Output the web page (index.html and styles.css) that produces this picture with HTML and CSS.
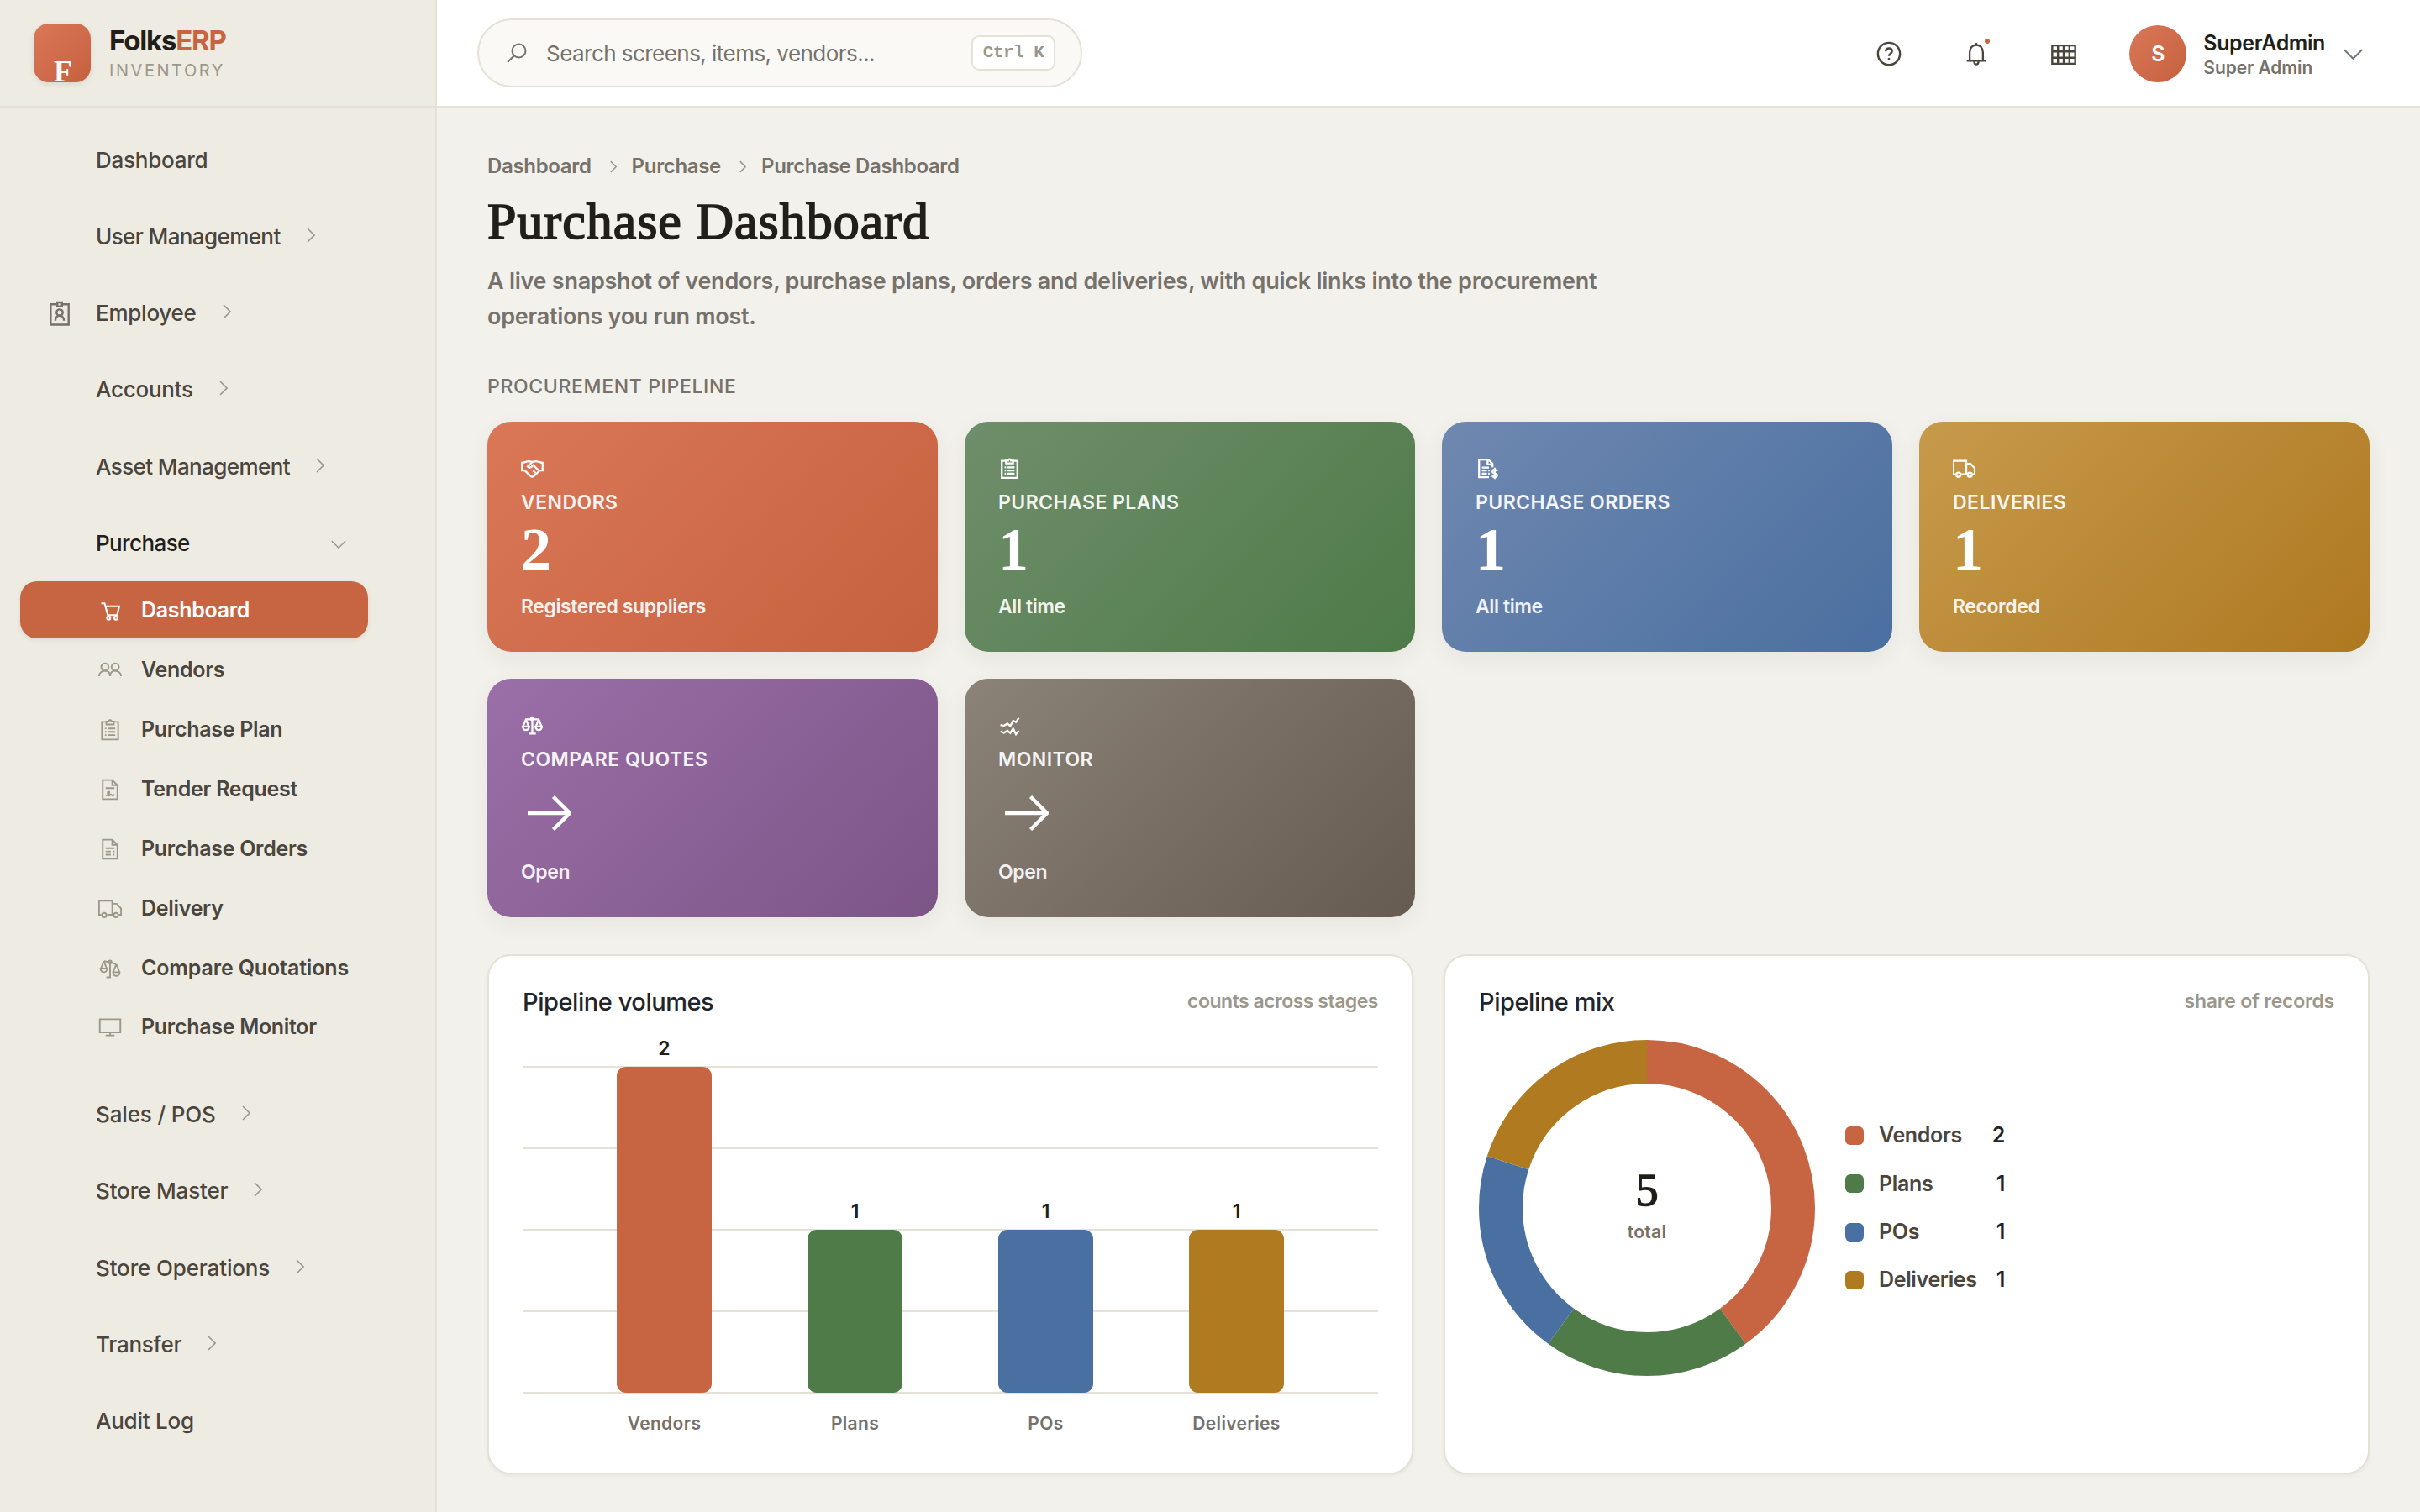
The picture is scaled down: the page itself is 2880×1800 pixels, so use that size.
FILE: index.html
```
<!DOCTYPE html>
<html lang="en">
<head>
    <meta charset="utf-8">
    <title>Purchase Dashboard - FolksERP</title>
    <link rel="stylesheet" href="styles.css">
</head>
<body>
    <!-- icon sprite, 32 unit grid -->
    <svg class="sprite" xmlns="http://www.w3.org/2000/svg">
        <symbol id="i-right" viewBox="0 0 10 18"><path d="M1 1l8 8-8 8"/></symbol>
        <symbol id="i-down" viewBox="0 0 24 14"><path d="M1 1l11 11L23 1"/></symbol>
        <symbol id="i-search" viewBox="0 0 24 24"><circle cx="14.5" cy="9.5" r="8"/><path d="M9 15.2L1 23"/></symbol>
        <symbol id="i-help" viewBox="0 0 32 32"><circle cx="16" cy="16" r="14"/><path d="M12 13c0-2.400 1.600-4 4-4s4 1.600 4 3.800c0 2.800-4 3-4 6.200M16 21.300v2.600"/></symbol>
        <symbol id="i-bell" viewBox="0 0 32 32"><path d="M16 1v3M7 25V14c0-5.500 3.700-10 9-10s9 4.500 9 10v11M3 25.500h26M13 26c0 2.500 1 4.500 3 4.500s3-2 3-4.500"/></symbol>
        <symbol id="i-grid" viewBox="0 0 32 26"><path d="M1.200 1.200h29.600v23.600H1.200zM8.600 1v24M16 1v24M23.400 1v24M1 9h30M1 17h30"/></symbol>
        <symbol id="i-badge" viewBox="0 0 28 32"><path d="M11 4.500H2.500v26h23v-26H17"/><path d="M11 2h6v5h-6z"/><circle cx="14" cy="15" r="4"/><path d="M8.500 25.500c0-3.500 2-6.500 5.500-6.500s5.500 3 5.500 6.500"/></symbol>
        <symbol id="i-cart" viewBox="0 0 32 32"><path d="M4 6h4.500l4.500 16h12.500L28.500 10H10"/><circle cx="14" cy="26" r="2.200"/><circle cx="24" cy="26" r="2.200"/></symbol>
        <symbol id="i-users" viewBox="0 0 32 32"><circle cx="9" cy="11.500" r="5"/><circle cx="23" cy="11.500" r="5"/><path d="M1 24c0-4.200 3.500-7.500 8-7.500s7 3 7 7.500c0-4.500 3-7.500 7-7.500s8 3.300 8 7.500"/></symbol>
        <symbol id="i-clip" viewBox="0 0 32 32"><path d="M11 5H5v24h22V5h-6"/><path d="M11 4.500h3c0-1.200.8-2 2-2s2 .8 2 2h3v4H11z"/><path d="M9 14h2M13 14h10M9 18.500h2M13 18.500h10M9 23h2M13 23h10"/></symbol>
        <symbol id="i-contract" viewBox="0 0 32 32"><path d="M6 3h13l7 7v19H6zM19 3v7h7M10 14h12"/><path d="M10 24c3 0 5-2 5-4.300 0-1.400-2.200-1.400-2.200.4 0 2.400.2 4.300 1.700 4.300s1.500-2 2.500-2 1 1.800 2 1.800 1-1 3-1"/></symbol>
        <symbol id="i-invoice" viewBox="0 0 32 32"><path d="M6 3h13l7 7v19H6zM19 3v7h7M10 14.500h12M10 19h7M20 19h2M10 23.500h7M20 23.500h2"/></symbol>
        <symbol id="i-dollar" viewBox="0 0 32 32"><path d="M19 28H5V3h13l6 6v5M17 3v7h7M9 14.500h10M9 18.500h7M9 23h7M18 18.500h2M18 23h2"/><path d="M30.500 19.500c-.5-1.500-1.600-2.200-3.300-2.200-2 0-3.300 1-3.300 2.700 0 3.600 6.600 1.600 6.600 5.300 0 1.700-1.300 2.700-3.300 2.700-1.800 0-3-.8-3.400-2.200M27.200 14.500v16"/></symbol>
        <symbol id="i-truck" viewBox="0 0 32 32"><path d="M4 24H1V5h18v19H12M19 9h6l6 6.500V24h-3M20 24h-1"/><circle cx="8" cy="24.500" r="3"/><circle cx="24" cy="24.500" r="3"/></symbol>
        <symbol id="i-scale" viewBox="0 0 32 32"><path d="M6 7h20M16 5v22M11 27h10"/><circle cx="16" cy="6" r="2"/><path d="M7 7L3 17M7 7l4 10M25 7l-4 10M25 7l4 10M2.500 17h9c0 3-2 5-4.500 5s-4.500-2-4.500-5zM20.500 17h9c0 3-2 5-4.500 5s-4.500-2-4.500-5z"/></symbol>
        <symbol id="i-scale-tilt" viewBox="0 0 32 32"><path d="M8 6l8 1.500L24 10M16 7.500V28h-5"/><circle cx="16" cy="7" r="2"/><path d="M7.500 6L3.500 16M7.500 6l4 10M24.500 10l-4 10M24.500 10l4 10M3 16h9c0 3-2 5-4.500 5S3 19 3 16zM20 21h9c0 3-2 5-4.500 5S20 24 20 21z"/></symbol>
        <symbol id="i-monitor" viewBox="0 0 32 32"><path d="M2 5h28v18H2zM16 23v4M10 27h12"/></symbol>
        <symbol id="i-handshake" viewBox="0 0 32 32"><path d="M1.500 7.500c4 0 6-2 9.500-2 2 0 3 .5 5 1 2-.5 3-1 5-1 3.500 0 5.500 2 9.500 2v11h-4L18 26.500c-1.500 1-3 1-4.500 0L5.500 18.500h-4z"/><path d="M16 6.500L9.500 13c1.500 2.200 4 2 6-.2l2-1.800 7.500 7.500M17 18.500l3.500 3.500"/></symbol>
        <symbol id="i-wave" viewBox="0 0 32 32"><path d="M3 15l5 1 5-3 4 3.500 4-7.500 4 2 4-6M3 24l5 2 5-3 4 3.500 4-6.500 4 8 4-5"/></symbol>
        <symbol id="i-arrow" viewBox="0 0 60 44"><path d="M8 22h48M38.500 2.500L58 22 38.500 41.500"/></symbol>
    </svg>

    <div class="layout">
        <aside class="sidebar">
            <div class="brand">
                <div class="logo"><span>F</span></div>
                <div class="brand_text">
                    <div class="brand_name">Folks<b>ERP</b></div>
                    <div class="brand_sub">INVENTORY</div>
                </div>
            </div>
            <nav class="nav">
                <div class="nav_item"><span>Dashboard</span></div>
                <div class="nav_item tight"><span>User Management</span><svg class="chev"><use href="#i-right"/></svg></div>
                <div class="nav_item"><svg class="nav_icon"><use href="#i-badge"/></svg><span>Employee</span><svg class="chev"><use href="#i-right"/></svg></div>
                <div class="nav_item"><span>Accounts</span><svg class="chev"><use href="#i-right"/></svg></div>
                <div class="nav_item tight"><span>Asset Management</span><svg class="chev"><use href="#i-right"/></svg></div>
                <div class="nav_item open"><span>Purchase</span><svg class="chev_down"><use href="#i-down"/></svg></div>
                <div class="submenu">
                    <div class="sub_item active"><svg class="icon"><use href="#i-cart"/></svg>Dashboard</div>
                    <div class="sub_item"><svg class="icon"><use href="#i-users"/></svg>Vendors</div>
                    <div class="sub_item"><svg class="icon"><use href="#i-clip"/></svg>Purchase Plan</div>
                    <div class="sub_item"><svg class="icon"><use href="#i-contract"/></svg>Tender Request</div>
                    <div class="sub_item"><svg class="icon"><use href="#i-invoice"/></svg>Purchase Orders</div>
                    <div class="sub_item"><svg class="icon"><use href="#i-truck"/></svg>Delivery</div>
                    <div class="sub_item wide"><svg class="icon"><use href="#i-scale-tilt"/></svg>Compare Quotations</div>
                    <div class="sub_item"><svg class="icon"><use href="#i-monitor"/></svg>Purchase Monitor</div>
                </div>
                <div class="nav_item loose"><span>Sales / POS</span><svg class="chev"><use href="#i-right"/></svg></div>
                <div class="nav_item loose"><span>Store Master</span><svg class="chev"><use href="#i-right"/></svg></div>
                <div class="nav_item loose"><span>Store Operations</span><svg class="chev"><use href="#i-right"/></svg></div>
                <div class="nav_item"><span>Transfer</span><svg class="chev"><use href="#i-right"/></svg></div>
                <div class="nav_item"><span>Audit Log</span></div>
            </nav>
        </aside>

        <div class="main">
            <header class="topbar">
                <div class="search">
                    <svg class="search_icon"><use href="#i-search"/></svg>
                    <span class="placeholder">Search screens, items, vendors...</span>
                    <kbd class="kbd">Ctrl K</kbd>
                </div>
                <div class="top_actions">
                    <div class="top_btn"><svg class="help"><use href="#i-help"/></svg></div>
                    <div class="top_btn"><svg class="bell"><use href="#i-bell"/></svg><i class="dot"></i></div>
                    <div class="top_btn"><svg class="apps"><use href="#i-grid"/></svg></div>
                    <div class="avatar">S</div>
                    <div class="user">
                        <div class="user_name">SuperAdmin</div>
                        <div class="user_role">Super Admin</div>
                    </div>
                    <svg class="user_chev"><use href="#i-down"/></svg>
                </div>
            </header>

            <main class="content">
                <div class="crumbs">
                    <span>Dashboard</span><svg class="crumb_sep"><use href="#i-right"/></svg><span>Purchase</span><svg class="crumb_sep"><use href="#i-right"/></svg><span>Purchase Dashboard</span>
                </div>
                <h1 class="title">Purchase Dashboard</h1>
                <p class="lead">A live snapshot of vendors, purchase plans, orders and deliveries, with quick links into the procurement operations you run most.</p>

                <div class="section">PROCUREMENT PIPELINE</div>
                <div class="kpis">
                    <div class="kpi terra">
                        <svg class="kpi_icon"><use href="#i-handshake"/></svg>
                        <div class="kpi_label">VENDORS</div>
                        <div class="kpi_value">2</div>
                        <div class="kpi_sub">Registered suppliers</div>
                    </div>
                    <div class="kpi green">
                        <svg class="kpi_icon"><use href="#i-clip"/></svg>
                        <div class="kpi_label">PURCHASE PLANS</div>
                        <div class="kpi_value">1</div>
                        <div class="kpi_sub">All time</div>
                    </div>
                    <div class="kpi blue">
                        <svg class="kpi_icon"><use href="#i-dollar"/></svg>
                        <div class="kpi_label">PURCHASE ORDERS</div>
                        <div class="kpi_value">1</div>
                        <div class="kpi_sub">All time</div>
                    </div>
                    <div class="kpi gold">
                        <svg class="kpi_icon"><use href="#i-truck"/></svg>
                        <div class="kpi_label">DELIVERIES</div>
                        <div class="kpi_value">1</div>
                        <div class="kpi_sub">Recorded</div>
                    </div>
                    <div class="kpi purple">
                        <svg class="kpi_icon"><use href="#i-scale"/></svg>
                        <div class="kpi_label">COMPARE QUOTES</div>
                        <div class="kpi_value go"><svg class="arrow"><use href="#i-arrow"/></svg></div>
                        <div class="kpi_sub">Open</div>
                    </div>
                    <div class="kpi stone">
                        <svg class="kpi_icon"><use href="#i-wave"/></svg>
                        <div class="kpi_label">MONITOR</div>
                        <div class="kpi_value go"><svg class="arrow"><use href="#i-arrow"/></svg></div>
                        <div class="kpi_sub">Open</div>
                    </div>
                </div>

                <div class="charts">
                    <div class="card">
                        <div class="card_head"><span class="card_title">Pipeline volumes</span><span class="card_note">counts across stages</span></div>
                        <svg class="bars" viewBox="0 0 1018 500">
                            <path class="grid" d="M0 54h1018M0 151h1018M0 248h1018M0 345h1018M0 442h1018"/>
                            <rect class="f_terra" x="112" y="54" width="113" height="388" rx="11"/>
                            <rect class="f_green" x="339" y="248" width="113" height="194" rx="11"/>
                            <rect class="f_blue" x="566" y="248" width="113" height="194" rx="11"/>
                            <rect class="f_gold" x="793" y="248" width="113" height="194" rx="11"/>
                            <g class="bar_value">
                                <text x="168.500" y="40">2</text>
                                <text x="395.500" y="234">1</text>
                                <text x="622.500" y="234">1</text>
                                <text x="849.500" y="234">1</text>
                            </g>
                            <g class="bar_label">
                                <text x="168.500" y="486">Vendors</text>
                                <text x="395.500" y="486">Plans</text>
                                <text x="622.500" y="486">POs</text>
                                <text x="849.500" y="486">Deliveries</text>
                            </g>
                        </svg>
                    </div>
                    <div class="card">
                        <div class="card_head"><span class="card_title">Pipeline mix</span><span class="card_note loose">share of records</span></div>
                        <div class="mix">
                            <!-- pathLength 5 = one unit per record -->
                            <svg class="donut" viewBox="0 0 400 400">
                                <g transform="rotate(-90 200 200)">
                                    <circle class="s_terra" cx="200" cy="200" r="174" pathLength="5" stroke-dasharray="2 3"/>
                                    <circle class="s_green" cx="200" cy="200" r="174" pathLength="5" stroke-dasharray="1 4" stroke-dashoffset="-2"/>
                                    <circle class="s_blue" cx="200" cy="200" r="174" pathLength="5" stroke-dasharray="1 4" stroke-dashoffset="-3"/>
                                    <circle class="s_gold" cx="200" cy="200" r="174" pathLength="5" stroke-dasharray="1 4" stroke-dashoffset="-4"/>
                                </g>
                                <text class="total_num" x="200" y="197">5</text>
                                <text class="total_label" x="200" y="236">total</text>
                            </svg>
                            <div class="legend">
                                <i class="swatch terra_bg"></i><span>Vendors</span><b>2</b>
                                <i class="swatch green_bg"></i><span>Plans</span><b>1</b>
                                <i class="swatch blue_bg"></i><span>POs</span><b>1</b>
                                <i class="swatch gold_bg"></i><span>Deliveries</span><b>1</b>
                            </div>
                        </div>
                    </div>
                </div>
            </main>
        </div>
    </div>
</body>
</html>
```
FILE: styles.css
```
* {
    box-sizing: border-box;
}

body {
    margin: 0;
    background: #f3f1ec;
    color: #221f1a;
    font-family: Inter, "Liberation Sans", sans-serif;
}

svg {
    flex: none;
    fill: none;
    stroke: currentColor;
    stroke-width: 2;
}

.sprite {
    display: none;
}

.layout {
    display: flex;
    height: 1800px;
    overflow: hidden;
}

/* sidebar */
.sidebar {
    flex: none;
    width: 520px;
    background: #eeebe3;
    border-right: 2px solid #e5e1d6;
}

.brand {
    display: flex;
    align-items: center;
    gap: 22px;
    height: 128px;
    padding-left: 40px;
    background: #eeebe2;
    border-bottom: 2px solid #e5e1d6;
}

.logo {
    width: 68px;
    height: 70px;
    border-radius: 18px;
    overflow: hidden;
    text-align: center;
    color: #fff;
    font: 700 36px/94px "Liberation Serif", serif;
    background: linear-gradient(135deg, #d97757, #c6613f);
    box-shadow: 0 2px 6px rgba(34, 31, 26, .1);
}

.logo span {
    display: block;
    padding: 10px 0 0 2px;
}

.brand_text {
    padding-top: 5px;
}

.brand_name {
    font-size: 33px;
    font-weight: 650;
    line-height: 38px;
    letter-spacing: -1.2px;
}

.brand_name b {
    font-weight: 650;
    color: #c76442;
}

.brand_sub {
    font-size: 20px;
    line-height: 35px;
    letter-spacing: 2.550px;
    color: #9c978b;
}

.nav {
    padding-top: 16.400px;
}

.nav_item {
    display: flex;
    align-items: center;
    height: 91.300px;
    padding-left: 114px;
    font-size: 26px;
    font-weight: 530;
    letter-spacing: -.25px;
    color: #4a453d;
}

.nav_item.tight {
    letter-spacing: -.6px;
}

.nav_item.loose {
    letter-spacing: -.15px;
}

.nav_item.open {
    color: #221f1a;
    letter-spacing: -.6px;
}

.nav_icon {
    width: 26px;
    height: 30px;
    margin: 0 30px 0 -56px;
    color: #76716a;
    stroke-width: 2.600;
}

.chev {
    width: 10px;
    height: 18px;
    margin: -3px 0 0 31px;
    color: #9c978b;
    stroke-width: 1.600;
}

.chev_down {
    width: 18px;
    height: 11px;
    margin: 3px 106px 0 auto;
    color: #9c978b;
}

.submenu {
    padding-bottom: 21.600px;
}

.sub_item {
    display: flex;
    align-items: center;
    height: 68px;
    margin: 0 80px 2.900px 24px;
    padding-left: 93px;
    border-radius: 20px;
    font-size: 25px;
    font-weight: 600;
    letter-spacing: -.3px;
    color: #4a453d;
    white-space: nowrap;
}

.sub_item.wide {
    letter-spacing: -.14px;
}

.sub_item.active {
    background: #c76442;
    color: #fff;
    box-shadow: 0 2px 6px rgba(34, 31, 26, .08);
}

.icon {
    width: 28px;
    height: 28px;
    margin: 2px 23px 0 0;
    color: #9c978b;
    stroke-width: 2.200;
}

.active .icon {
    color: #fff;
    stroke-width: 2.400;
}

/* top bar */
.main {
    flex: 1;
    min-width: 0;
}

.topbar {
    display: flex;
    align-items: center;
    justify-content: space-between;
    height: 128px;
    padding: 0 68px 0 48px;
    background: #fff;
    border-bottom: 2px solid #e5e1d6;
}

.search {
    display: flex;
    align-items: center;
    width: 720px;
    height: 82px;
    padding: 0 30px 0 33px;
    border: 2px solid #e5e1d6;
    border-radius: 41px;
    background: #faf9f6;
    color: #76716a;
}

.search_icon {
    width: 24px;
    height: 24px;
}

.placeholder {
    flex: 1;
    padding-left: 23px;
    font-size: 26px;
    letter-spacing: -.54px;
}

.kbd {
    width: 100px;
    height: 42px;
    border: 2px solid #e5e1d6;
    border-radius: 9px;
    background: #fff;
    color: #9c978b;
    font: 700 21px/38px "Liberation Mono", monospace;
    letter-spacing: -.5px;
    text-align: center;
}

.top_actions {
    display: flex;
    align-items: center;
}

.top_btn {
    position: relative;
    display: flex;
    align-items: center;
    justify-content: center;
    width: 104px;
    height: 72px;
    color: #4a453d;
}

.help {
    width: 30px;
    height: 30px;
    margin-top: 2px;
    stroke-width: 2.600;
}

.bell {
    width: 28px;
    height: 30px;
    margin-top: 2px;
    stroke-width: 2.600;
}

.apps {
    width: 30px;
    height: 24px;
    margin-top: 3px;
    stroke-width: 2.600;
}

.dot {
    position: absolute;
    left: 62px;
    top: 19px;
    width: 6px;
    height: 6px;
    border-radius: 50%;
    background: #c76442;
}

.avatar {
    width: 68px;
    height: 68px;
    margin: 1px 0 0 26px;
    border-radius: 50%;
    background: linear-gradient(135deg, #d97757, #c6613f);
    color: #fff;
    font-size: 25px;
    font-weight: 600;
    line-height: 68px;
    text-align: center;
}

.user {
    padding: 4px 0 0 20px;
}

.user_name {
    font-size: 25px;
    font-weight: 600;
    line-height: 30px;
    letter-spacing: -.4px;
}

.user_role {
    font-size: 21px;
    font-weight: 600;
    line-height: 29px;
    letter-spacing: -.1px;
    color: #76716a;
}

.user_chev {
    width: 23px;
    height: 14px;
    margin: 4px 0 0 22px;
    color: #6c757d;
}

/* page */
.content {
    padding: 51px 60px 0;
}

.crumbs {
    display: flex;
    align-items: center;
    height: 37px;
    color: #76716a;
    font-size: 24px;
    font-weight: 580;
    letter-spacing: -.33px;
}

.crumb_sep {
    width: 8px;
    height: 15px;
    margin: 1px 18px 0 22px;
    color: #9c978b;
}

.title {
    height: 70px;
    margin: 12px 0 16px;
    font: 400 62px/71px "Liberation Serif", serif;
    letter-spacing: 1px;
    -webkit-text-stroke: 1.700px #221f1a;
}

.lead {
    width: 1360px;
    margin: 0;
    color: #76716a;
    font-size: 27px;
    font-weight: 580;
    line-height: 42px;
    letter-spacing: -.26px;
}

.section {
    margin: 44px 0 24px;
    color: #76716a;
    font-size: 23px;
    font-weight: 520;
    line-height: 36px;
    letter-spacing: .65px;
}

.kpis {
    display: grid;
    grid-template-columns: repeat(4, 1fr);
    gap: 32px;
}

.kpi {
    padding: 39px 40px 36px;
    border-radius: 28px;
    color: #fff;
    box-shadow: 0 8px 28px rgba(34, 31, 26, .06);
}

.terra { background: linear-gradient(135deg, #d97757, #c6613f); }
.green { background: linear-gradient(135deg, #6f8e6b, #4e7a48); }
.blue { background: linear-gradient(135deg, #6f88b0, #4a6fa0); }
.gold { background: linear-gradient(135deg, #c79a4b, #ae7820); }
.purple { background: linear-gradient(135deg, #9b6fa8, #7c5587); }
.stone { background: linear-gradient(135deg, #8b8278, #655b50); }

.kpi_icon {
    display: block;
    width: 27px;
    height: 34px;
    margin-bottom: 3px;
    stroke-width: 2.700;
}

.kpi_label {
    font-size: 23px;
    font-weight: 600;
    line-height: 40px;
    letter-spacing: .45px;
    opacity: .92;
}

.kpi_value {
    height: 72px;
    font: 700 72px/73px "Liberation Serif", serif;
}

.kpi_value.go {
    height: 82px;
    padding-top: 22px;
}

.arrow {
    display: block;
    width: 60px;
    height: 44px;
    stroke-width: 4.500;
}

.kpi_sub {
    margin-top: 14px;
    font-size: 23px;
    font-weight: 620;
    line-height: 36px;
    letter-spacing: -.4px;
    opacity: .9;
}

.charts {
    display: grid;
    grid-template-columns: 1fr 1fr;
    gap: 36px;
    margin-top: 44px;
}

.card {
    height: 619px;
    padding: 35px 40px 0;
    border: 2px solid #e5e1d6;
    border-radius: 28px;
    background: #fff;
    box-shadow: 0 2px 4px rgba(34, 31, 26, .06);
}

.card_head {
    display: flex;
    align-items: center;
    justify-content: space-between;
    height: 38px;
}

.card_title {
    color: #212529;
    font-size: 29px;
    font-weight: 500;
    letter-spacing: -.45px;
}

.card_note {
    color: #9c978b;
    font-size: 23px;
    font-weight: 600;
    letter-spacing: -.5px;
}

.card_note.loose {
    letter-spacing: -.22px;
}

.bars {
    display: block;
    width: 1018px;
    height: 500px;
    margin-top: 5px;
    stroke: none;
}

.grid { stroke: #e5e1d6; stroke-width: 2; }
.f_terra { fill: #c76442; }
.f_green { fill: #4f7b49; }
.f_blue { fill: #4a6fa1; }
.f_gold { fill: #b07a20; }

.bar_value {
    fill: #221f1a;
    font-size: 23px;
    font-weight: 560;
    text-anchor: middle;
}

.bar_label {
    fill: #76716a;
    font-size: 21px;
    font-weight: 600;
    letter-spacing: .35px;
    text-anchor: middle;
}

.mix {
    display: flex;
    align-items: center;
    gap: 36px;
    margin-top: 27px;
}

.donut {
    width: 400px;
    height: 400px;
    stroke: none;
}

.donut circle {
    stroke-width: 52;
}

.s_terra { stroke: #c76442; }
.s_green { stroke: #4f7b49; }
.s_blue { stroke: #4a6fa1; }
.s_gold { stroke: #b07a20; }

.total_num {
    fill: #221f1a;
    stroke: #221f1a;
    stroke-width: 1.500;
    font: 400 54px "Liberation Serif", serif;
    text-anchor: middle;
}

.total_label {
    fill: #76716a;
    font-size: 21px;
    font-weight: 600;
    letter-spacing: .3px;
    text-anchor: middle;
}

.legend {
    display: grid;
    grid-template-columns: 22px auto auto;
    align-items: center;
    gap: 18px;
    color: #4a453d;
    font-size: 25px;
    font-weight: 570;
    line-height: 39.300px;
    letter-spacing: -.35px;
}

.legend b {
    color: #212529;
    font-weight: 580;
    text-align: right;
}

.swatch {
    width: 22px;
    height: 22px;
    border-radius: 6px;
}

.terra_bg { background: #c76442; }
.green_bg { background: #4f7b49; }
.blue_bg { background: #4a6fa1; }
.gold_bg { background: #b07a20; }
```
